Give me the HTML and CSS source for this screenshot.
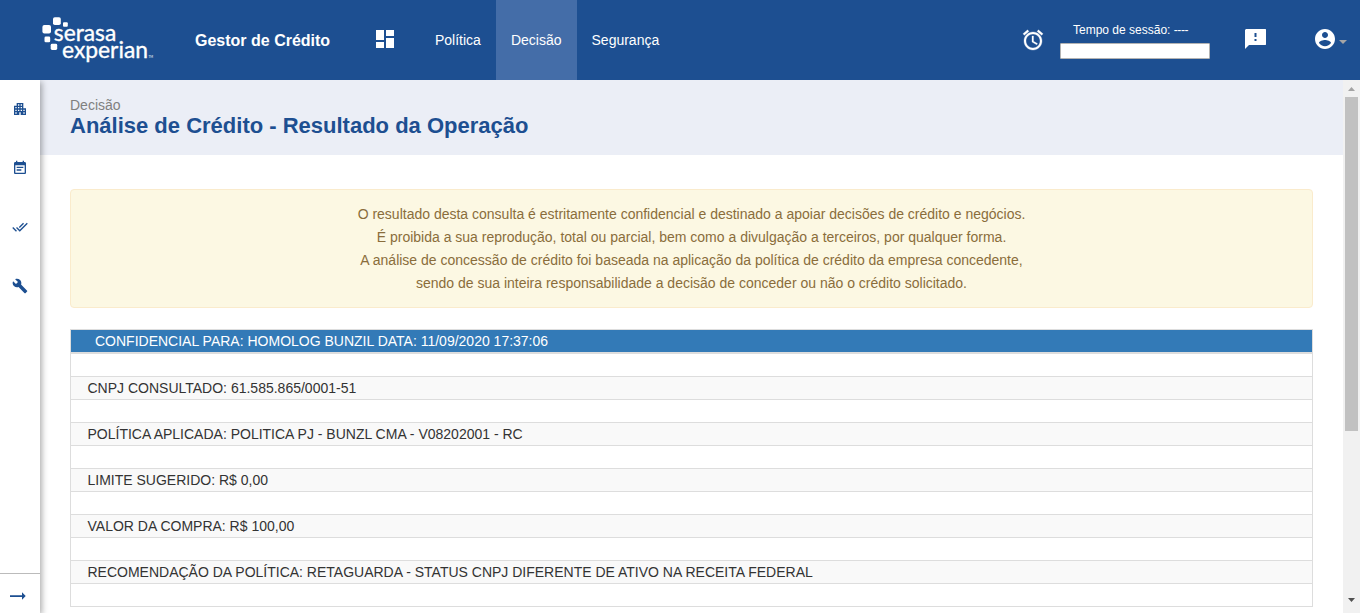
FILE: index.html
```html
<!DOCTYPE html>
<html lang="pt-BR">
<head>
<meta charset="utf-8">
<title>Gestor de Crédito</title>
<link rel="stylesheet" href="styles.css">
</head>
<body>
<header class="topbar">
  <svg class="logo" width="112" height="50" viewBox="42 16 112 50" fill="#fff">
    <rect x="42.4" y="25" width="8.6" height="8.4" rx="2"/>
    <rect x="53" y="17.2" width="7.8" height="7.8" rx="1.8"/>
    <rect x="63" y="22.2" width="4.8" height="4.6" rx="1"/>
    <rect x="44.5" y="36.6" width="5.7" height="5.6" rx="1.3"/>
    <rect x="50.7" y="43.8" width="6.5" height="6.1" rx="1.4"/>
    <text class="logo-text" x="53.8" y="41" textLength="62.500" lengthAdjust="spacingAndGlyphs">serasa</text>
    <text class="logo-text" x="62" y="58.4" textLength="86" lengthAdjust="spacingAndGlyphs">experian</text>
    <text class="logo-tm" x="148.6" y="58.4">TM</text>
  </svg>
  <strong class="product">Gestor de Crédito</strong>
  <svg class="dash" width="20" height="18" viewBox="0 0 20 18" fill="#fff"><path d="M1 0h8v10H1zM11 0h8v6H11zM1 12h8v6H1zM11 8h8v10H11z"/></svg>
  <nav class="nav">
    <a class="nav-item">Política</a>
    <a class="nav-item active">Decisão</a>
    <a class="nav-item">Segurança</a>
  </nav>
  <div class="tools">
    <svg class="alarm" width="24" height="24" viewBox="0 0 24 24" fill="#fff" stroke="#fff" stroke-width=".3"><path d="M22 5.72l-4.6-3.86-1.29 1.53 4.6 3.86L22 5.72zM7.88 3.39L6.6 1.86 2 5.71l1.29 1.53 4.59-3.85zM12.5 8H11v6l4.75 2.85.75-1.23-4-2.37V8zM12 4c-4.97 0-9 4.03-9 9s4.02 9 9 9c4.97 0 9-4.03 9-9s-4.03-9-9-9zm0 16c-3.87 0-7-3.13-7-7s3.13-7 7-7 7 3.13 7 7-3.13 7-7 7z"/></svg>
    <div class="session">
      <span class="session-label">Tempo de sessão: <span class="dashes">----</span></span>
      <div class="session-bar"></div>
    </div>
    <svg class="feedback" width="21" height="20" viewBox="0 0 21 20" fill="#fff"><path fill-rule="evenodd" d="M1 0h19.500l.5.500V15.500l-.5.500H4L0 20V1zM9.500 4v4h2V4zM9.500 10v2h2v-2z"/></svg>
    <svg class="user" width="24" height="24" viewBox="0 0 24 24" fill="#fff"><path d="M12 2C6.480 2 2 6.480 2 12s4.480 10 10 10 10-4.480 10-10S17.520 2 12 2zm0 3c1.660 0 3 1.340 3 3s-1.340 3-3 3-3-1.340-3-3 1.340-3 3-3zm0 14.200c-2.500 0-4.710-1.280-6-3.220.03-1.990 4-3.080 6-3.080 1.990 0 5.970 1.090 6 3.080-1.290 1.940-3.500 3.220-6 3.220z"/></svg>
    <span class="caret"></span>
  </div>
</header>
<div class="shell">
  <aside class="sidebar">
    <svg class="side-icon" width="16" height="16" viewBox="0 0 24 24"><path d="M17 11V3H7v4H3v14h8v-4h2v4h8V11h-4zM7 19H5v-2h2v2zm0-4H5v-2h2v2zm0-4H5V9h2v2zm4 4H9v-2h2v2zm0-4H9V9h2v2zm0-4H9V5h2v2zm4 8h-2v-2h2v2zm0-4h-2V9h2v2zm0-4h-2V5h2v2zm4 12h-2v-2h2v2zm0-4h-2v-2h2v2z"/></svg>
    <svg class="side-icon" width="16" height="16" viewBox="0 0 24 24"><path d="M17 10H7v2h10v-2zm2-7h-1V1h-2v2H8V1H6v2H5c-1.110 0-1.990.9-1.990 2L3 19c0 1.100.89 2 2 2h14c1.100 0 2-.9 2-2V5c0-1.100-.9-2-2-2zm0 16H5V8h14v11zm-5-5H7v2h7v-2z"/></svg>
    <svg class="side-icon" width="16" height="16" viewBox="0 0 24 24"><path d="M18 7l-1.410-1.410-6.340 6.340 1.410 1.410L18 7zm4.240-1.410L11.660 16.170 7.480 12l-1.410 1.410L11.660 19l12-12-1.420-1.410zM.41 13.410L6 19l1.410-1.410L1.830 12 .41 13.410z"/></svg>
    <svg class="side-icon" width="16" height="16" viewBox="0 0 24 24"><path d="M22.700 19l-9.100-9.100c.9-2.300.4-5-1.500-6.900-2-2-5-2.400-7.400-1.300L9 6 6 9 1.600 4.700C.4 7.100.9 10.100 2.900 12.100c1.900 1.900 4.600 2.400 6.900 1.500l9.100 9.100c.4.400 1 .4 1.400 0l2.300-2.300c.5-.4.5-1.100.1-1.400z"/></svg>
    <div class="side-foot">
      <svg width="16" height="8" viewBox="0 0 16 8" fill="#1d4f91"><path d="M0 3.200h12V.3L15.700 4 12 7.700V4.900H0z"/></svg>
    </div>
  </aside>
  <main class="content">
    <div class="page-head">
      <div class="crumb">Decisão</div>
      <h1 class="title">Análise de Crédito - Resultado da Operação</h1>
    </div>
    <div class="body">
      <div class="notice">
        O resultado desta consulta é estritamente confidencial e destinado a apoiar decisões de crédito e negócios.<br>
        É proibida a sua reprodução, total ou parcial, bem como a divulgação a terceiros, por qualquer forma.<br>
        A análise de concessão de crédito foi baseada na aplicação da política de crédito da empresa concedente,<br>
        sendo de sua inteira responsabilidade a decisão de conceder ou não o crédito solicitado.
      </div>
      <div class="grid">
        <div class="grid-head">CONFIDENCIAL PARA: HOMOLOG BUNZIL DATA: 11/09/2020 17:37:06</div>
        <div class="row"></div>
        <div class="row">CNPJ CONSULTADO: 61.585.865/0001-51</div>
        <div class="row"></div>
        <div class="row">POLÍTICA APLICADA: POLITICA PJ - BUNZL CMA - V08202001 - RC</div>
        <div class="row"></div>
        <div class="row">LIMITE SUGERIDO: R$ 0,00</div>
        <div class="row"></div>
        <div class="row">VALOR DA COMPRA: R$ 100,00</div>
        <div class="row"></div>
        <div class="row">RECOMENDAÇÃO DA POLÍTICA: RETAGUARDA - STATUS CNPJ DIFERENTE DE ATIVO NA RECEITA FEDERAL</div>
        <div class="row"></div>
      </div>
    </div>
  </main>
  <div class="scrollbar">
    <svg class="arrow" width="7" height="4" viewBox="0 0 7 4" fill="#a3a3a3"><path d="M3.500 0L7 4H0z"/></svg>
    <div class="thumb"></div>
    <svg class="arrow arrow-down" width="7" height="4" viewBox="0 0 7 4" fill="#505050"><path d="M0 0h7L3.500 4z"/></svg>
  </div>
</div>
</body>
</html>
```

FILE: styles.css
```css
* { box-sizing: border-box; }
body {
  margin: 0;
  height: 613px;
  overflow: hidden;
  background: #fff;
  color: #333;
  font: 14px/20px "Liberation Sans", Arial, sans-serif;
}
svg { display: block; flex: none; }
.topbar {
  display: flex;
  align-items: center;
  height: 80px;
  padding-left: 42px;
  background: #1d4f91;
  color: #fff;
}
.logo { margin-top: 2px; }
.logo-text { font: 400 22.5px/1 Lato, sans-serif; stroke: #fff; stroke-width: .35px; }
.logo-tm { font: 3px Lato, sans-serif; }
.product { width: 180px; margin: 1px 0 0 41px; font-size: 16px; white-space: nowrap; }
.dash { margin-top: -2px; }
.nav { display: flex; align-self: stretch; margin-left: 25px; }
.nav-item { padding: 30px 15px; }
.nav-item.active { background: #446da8; }
.tools { display: flex; align-self: stretch; margin-left: auto; padding-right: 13px; }
.alarm { margin-top: 28px; }
.session { width: 150px; margin: 20px 0 0 15px; }
.session-label { display: block; padding-left: 13px; font-size: 12px; white-space: nowrap; }
.dashes { letter-spacing: -.4px; }
.session-bar { height: 16px; margin-top: 3px; background: #fff; border: 1px solid #b3b3b3; border-radius: 1px; }
.feedback { margin: 29px 0 0 35px; }
.user { margin: 27px 0 0 47px; }
.caret { margin: 40px 0 0 2px; width: 8px; height: 4px; border: 4px solid transparent; border-top-color: #a5a5a5; border-bottom: 0; }
.shell { display: flex; height: 533px; }
.sidebar {
  position: relative;
  display: flex;
  flex: none;
  flex-direction: column;
  align-items: center;
  gap: 43px;
  width: 40px;
  padding-top: 21px;
  background: #fff;
  box-shadow: 2px 2px 6px rgba(0, 0, 0, .32);
  clip-path: inset(0 -14px 0 0);
}
.side-icon { fill: #1d4f91; }
.side-foot {
  display: flex;
  align-items: center;
  justify-content: center;
  align-self: stretch;
  height: 40px;
  margin-top: auto;
  padding: 4px 4px 0 0;
  border-top: 1px solid #bbb;
}
.content { flex: 1; min-width: 0; }
.page-head { height: 75px; padding: 15px 30px 0; background: #ebeef6; }
.crumb { color: #808080; }
.title { margin: -2px 0 0; color: #1d4f91; font-size: 22px; line-height: 26px; white-space: nowrap; }
.body { padding: 34px 30px 0; }
.notice {
  height: 119px;
  padding: 13px 15px;
  border: 1px solid #faebcc;
  border-radius: 4px;
  background: #fcf8e3;
  color: #8a6d3b;
  line-height: 23px;
  text-align: center;
}
.grid { margin-top: 21px; border: 1px solid #ddd; border-bottom: 0; white-space: nowrap; }
.grid-head { height: 24px; padding-left: 24px; border-bottom: 2px solid #ddd; background: #337ab7; background-clip: padding-box; color: #fff; line-height: 22px; }
.row { height: 23px; padding-left: 16.5px; border-bottom: 1px solid #ddd; line-height: 22px; }
.row:nth-child(odd) { background: #f9f9f9; }
.scrollbar { display: flex; flex: none; flex-direction: column; align-items: center; width: 17px; padding: 7px 0 11px; background: #f1f1f1; }
.thumb { width: 13px; height: 334px; margin-top: 6px; background: #c1c1c1; }
.arrow-down { margin-top: auto; }
```
